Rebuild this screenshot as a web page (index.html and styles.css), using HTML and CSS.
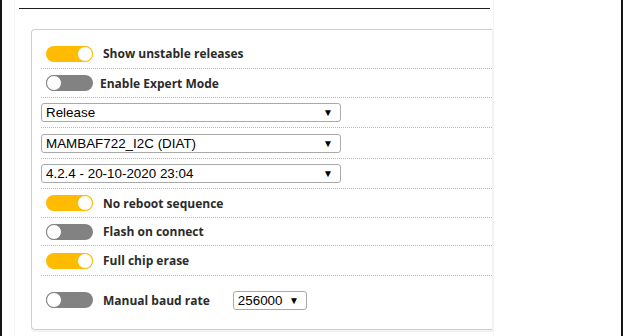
FILE: index.html
```html
<!DOCTYPE html>
<html lang="en">
<head>
  <meta charset="UTF-8" />
  <title>Firmware Flasher</title>
  <meta name="viewport" content="width=device-width, initial-scale=1" />
  <link rel="stylesheet" href="styles.css">
</head>
<body>
  <div class="frame">
    <div class="topline"></div>
    <div class="card">
      <div class="row toggle-row h30">
        <span class="switch on"><span class="knob"></span></span>
        <span class="label">Show unstable releases</span>
      </div>
      <div class="row toggle-row tight h29">
        <span class="switch"><span class="knob"></span></span>
        <span class="label">Enable Expert Mode</span>
      </div>
      <div class="row select-row h30">
        <div class="select wide"><span>Release</span><span class="arrow">▼</span></div>
      </div>
      <div class="row select-row h31">
        <div class="select wide"><span>MAMBAF722_I2C (DIAT)</span><span class="arrow">▼</span></div>
      </div>
      <div class="row select-row h30">
        <div class="select wide"><span>4.2.4 - 20-10-2020 23:04</span><span class="arrow">▼</span></div>
      </div>
      <div class="row toggle-row h29">
        <span class="switch on"><span class="knob"></span></span>
        <span class="label">No reboot sequence</span>
      </div>
      <div class="row toggle-row h28">
        <span class="switch"><span class="knob"></span></span>
        <span class="label">Flash on connect</span>
      </div>
      <div class="row toggle-row h30">
        <span class="switch on"><span class="knob"></span></span>
        <span class="label">Full chip erase</span>
      </div>
      <div class="row toggle-row last">
        <span class="switch"><span class="knob"></span></span>
        <span class="label">Manual baud rate</span>
        <div class="select baud"><span>256000</span><span class="arrow">▼</span></div>
      </div>
    </div>
  </div>
</body>
</html>
```

FILE: styles.css
```css
html, body {
  margin: 0;
  height: 100%;
  background: #fff;
}
body {
  box-sizing: border-box;
  border-left: 2px solid #151515;
  border-right: 2px solid #151515;
  overflow: hidden;
}
.frame {
  margin-left: 12px;
  width: 480px;
  height: 336px;
  border-left: 1px solid #f4f4f4;
  border-right: 1px solid #f4f4f4;
  padding-top: 8px;
  box-sizing: border-box;
}
.topline {
  margin-left: 4px;
  width: 471px;
  border-top: 1px solid #1c1c1c;
}
.card {
  margin-top: 20px;
  margin-left: 16px;
  width: 462px;
  height: 301px;
  box-sizing: border-box;
  border: 1px solid #cfcfcf;
  border-right-color: #f0f0f0;
  border-radius: 4px 0 0 4px;
  padding-top: 9px;
  padding-left: 9px;
  box-shadow: 0 2px 0 #f2f2f2;
}
.row {
  display: flex;
  align-items: center;
  border-bottom: 1px dotted #b8b8b8;
  box-sizing: border-box;
}
.h28 { height: 28px; }
.h29 { height: 29px; }
.h30 { height: 30px; }
.h31 { height: 31px; }
.toggle-row {
  padding-left: 5px;
}
.toggle-row.tight .label {
  margin-left: 7px;
}
.row.last {
  border-bottom: none;
  height: 52px;
  padding-bottom: 4px;
}
.switch {
  position: relative;
  width: 47px;
  height: 16px;
  border-radius: 8px;
  background: #828282;
  flex: none;
}
.switch .knob {
  position: absolute;
  left: 0;
  top: 0;
  width: 14px;
  height: 14px;
  border-radius: 50%;
  background: #fff;
  border: 1px solid #828282;
}
.switch.on {
  background: #ffbb00;
}
.switch.on .knob {
  left: auto;
  right: 0;
  border-color: #ffbb00;
}
.label {
  margin-left: 10px;
  font-family: "Open Sans", sans-serif;
  font-weight: bold;
  font-size: 12px;
  color: #2b2b2b;
}
.select {
  display: flex;
  justify-content: space-between;
  align-items: center;
  height: 19px;
  box-sizing: border-box;
  border: 1px solid #a9a9a9;
  border-radius: 3px;
  padding: 0 7px 0 4px;
  font-family: "Liberation Sans", Arial, sans-serif;
  font-size: 13.4px;
  color: #000;
  background: #fff;
}
.select.wide {
  width: 300px;
}
.select.baud {
  width: 74px;
  margin-left: 23px;
}
.arrow {
  font-size: 10px;
}
```
